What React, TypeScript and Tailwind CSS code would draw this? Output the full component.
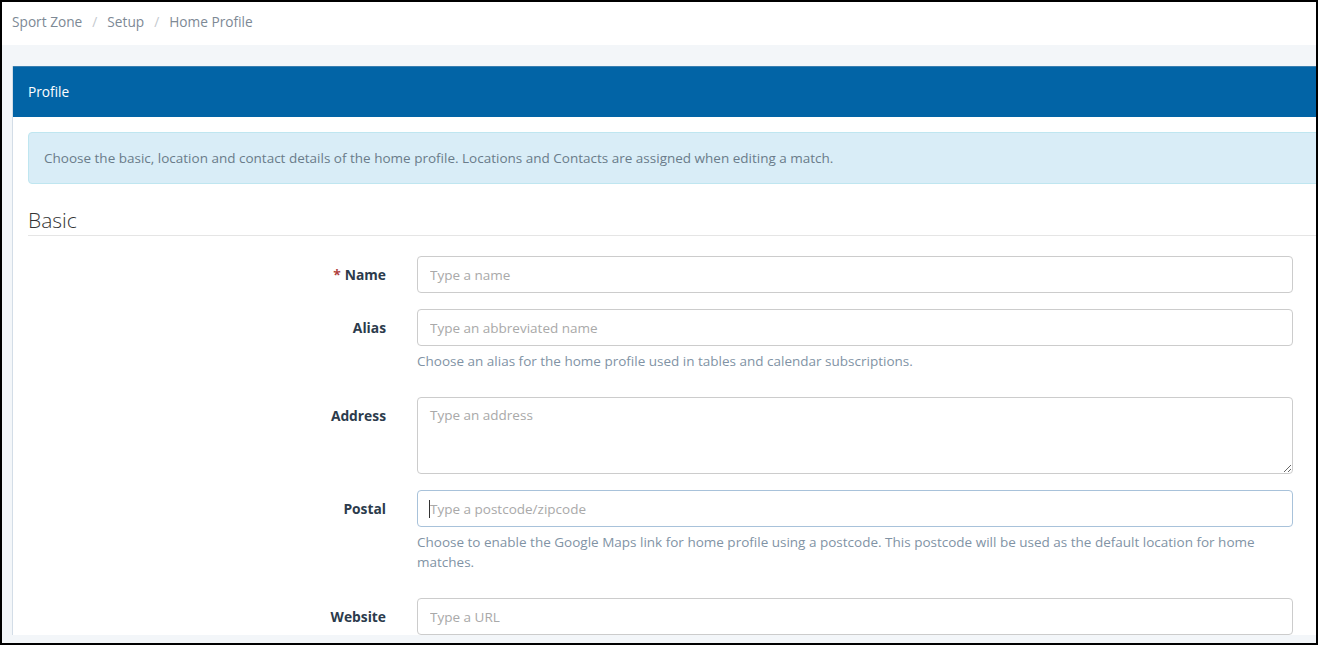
import React from "react";

const font = { fontFamily: '"Open Sans", "Noto Sans", sans-serif' };

interface RowProps {
  label: string;
  required?: boolean;
  placeholder: string;
  help?: string;
  multiline?: boolean;
  focused?: boolean;
}

function FormRow({ label, required, placeholder, help, multiline, focused }: RowProps) {
  return (
    <div className="flex mb-[16px]">
      <div className="w-[358px] shrink-0 pt-[9px] text-right text-[13.8px] leading-[20px] font-bold text-[#2c3b4c]">
        {required && <span className="text-[#b0413e] mr-[4px]">*</span>}
        {label}
      </div>
      <div className="ml-[31px] w-[876px] shrink-0">
        {multiline ? (
          <textarea
            placeholder={placeholder}
            className="block w-full h-[77px] rounded-[4px] border border-[#cccccc] px-[12px] py-[7px] text-[13.5px] leading-[20px] text-[#555] placeholder:text-[#a9a9a9] outline-none"
          />
        ) : (
          <div className="relative">
            <input
              placeholder={placeholder}
              className={`block w-full h-[37px] rounded-[4px] border px-[12px] text-[13.5px] text-[#555] placeholder:text-[#a9a9a9] outline-none ${
                focused ? "border-[#a8c2da]" : "border-[#cccccc]"
              }`}
            />
            {/* text caret */}
            {focused && <span className="absolute left-[12px] top-[10px] w-px h-[18px] bg-[#333]" />}
          </div>
        )}
        {help && (
          <p className="mt-[5px] mb-[10px] text-[13.5px] leading-[20px] text-[#8193a5]">{help}</p>
        )}
      </div>
    </div>
  );
}

export default function App() {
  return (
    <div
      className="w-[1318px] h-[645px] border-2 border-black overflow-hidden bg-[#f3f6f9]"
      style={font}
    >
      {/* Breadcrumb */}
      <div className="h-[43px] pb-[2px] bg-white flex items-center pl-[10px] text-[13.7px] text-[#7d8995]">
        <span>Sport Zone</span>
        <span className="mx-[10px] text-[#c4c9ce]">/</span>
        <span>Setup</span>
        <span className="mx-[10px] text-[#c4c9ce]">/</span>
        <span>Home Profile</span>
      </div>

      {/* Panel */}
      <div className="pt-[21px] pl-[10px]">
        <div className="w-[1330px] bg-white border-l border-[#d3dde7]">
          <div className="h-[51px] bg-[#0264a6] border-t border-[#3a7fb0] flex items-center pl-[15px] pt-[1px] text-[13.7px] text-white">
            Profile
          </div>
          <div className="pl-[15px] pt-[15px]">
            <div className="rounded-[4px] border border-[#bfe6f0] bg-[#d9edf7] p-[15px] text-[13.5px] leading-[20px] text-[#6a7c8a]">
              Choose the basic, location and contact details of the home profile. Locations and Contacts are assigned when editing a match.
            </div>
            <h3 className="mt-[24px] pb-[3px] border-b border-[#e5e5e5] text-[21px] leading-[24px] font-light text-[#333]">
              Basic
            </h3>
            <div className="pt-[20px]">
              <FormRow label="Name" required placeholder="Type a name" />
              <FormRow
                label="Alias"
                placeholder="Type an abbreviated name"
                help="Choose an alias for the home profile used in tables and calendar subscriptions."
              />
              <FormRow label="Address" placeholder="Type an address" multiline />
              <FormRow
                label="Postal"
                placeholder="Type a postcode/zipcode"
                focused
                help="Choose to enable the Google Maps link for home profile using a postcode. This postcode will be used as the default location for home matches."
              />
              <FormRow label="Website" placeholder="Type a URL" />
            </div>
          </div>
        </div>
      </div>
    </div>
  );
}
